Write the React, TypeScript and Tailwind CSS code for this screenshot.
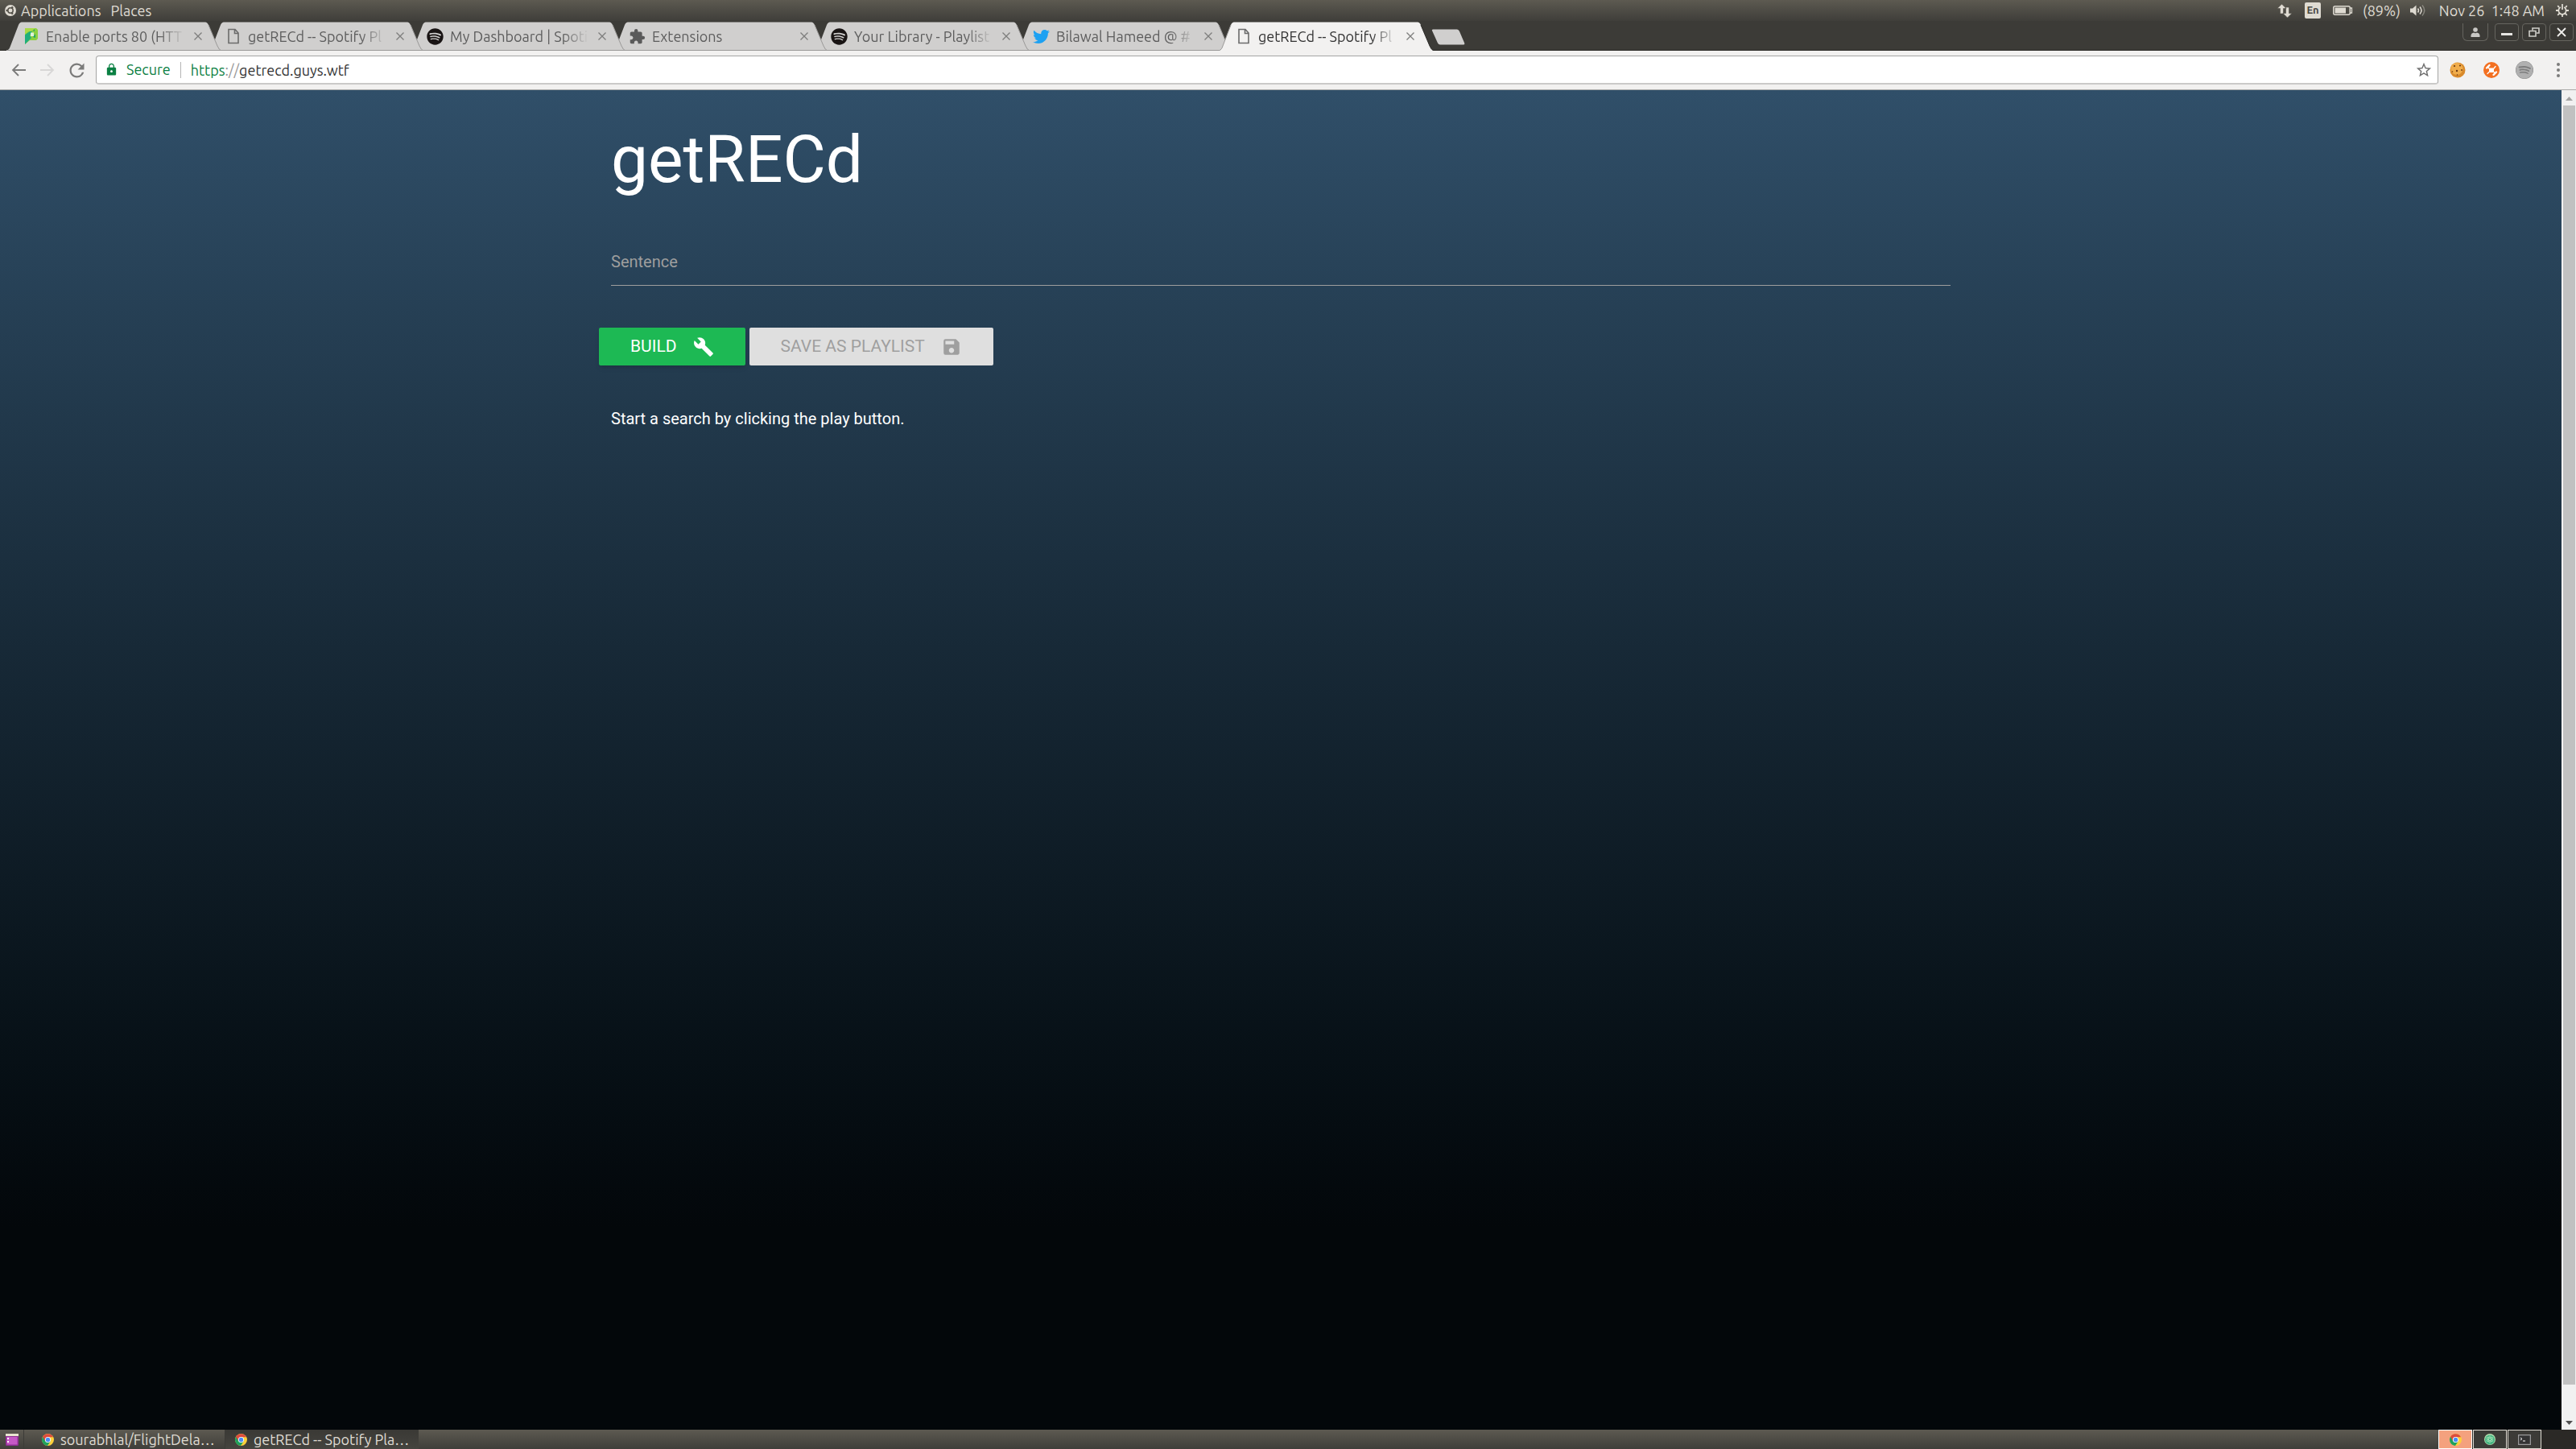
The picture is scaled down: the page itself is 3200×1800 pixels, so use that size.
import React from "react";
import { MdBuild, MdSave, MdExtension, MdLock, MdRefresh, MdStarBorder } from "react-icons/md";
import { FaSpotify, FaTwitter } from "react-icons/fa";

type Tab = { title: string; icon: React.ReactNode; active?: boolean };

const PageIcon = () => (
  <svg viewBox="0 0 14 20" className="h-5 w-4" fill="none" stroke="#6b6b6b" strokeWidth="1.6">
    <path d="M1 1.5h8l4 4.5v12.5H1zM8.5 1.5V6.5H13" />
  </svg>
);

const PathIcon = () => (
  <svg viewBox="0 0 16 20" className="h-5 w-4">
    <path d="M0 0h14l2 2v11l-2 2H6l-6 5z" fill="#8bd13f" />
    <path d="M0 8l6-4h3L6 9l2 3-8 8z" fill="#1fae7c" />
    <path d="M0 0h13L7 4H4L0 8z" fill="#a9da48" />
    <path d="M10 3l2-2v3zM10 11l3-4v5z" fill="#22a06e" />
    <path d="M7 5.500h4v4.500H7z" fill="#dff0d8" />
  </svg>
);

const ChromeIcon = () => (
  <svg viewBox="0 0 16 16" className="size-[15px] shrink-0">
    <circle cx="8" cy="8" r="8" fill="#fdd03b" />
    <path d="M8 8 1.1 4A8 8 0 0 0 7.4 16l4-6z" fill="#1fa15d" />
    <path d="M1.1 4A8 8 0 0 1 15 4.400H8L4.600 10z" fill="#dc4b3e" />
    <circle cx="8" cy="8" r="3.800" fill="#fff" />
    <circle cx="8" cy="8" r="2.900" fill="#4b8cf5" />
  </svg>
);

const UbuntuIcon = () => (
  <svg viewBox="0 0 14 14" className="size-[14px]">
    <circle cx="7" cy="7" r="7" fill="#dfdbd2" />
    <circle cx="7" cy="7" r="3.200" fill="none" stroke="#55524a" strokeWidth="1.500" />
    <g fill="#55524a">
      <circle cx="2.600" cy="7" r="1.200" />
      <circle cx="9.200" cy="3.200" r="1.200" />
      <circle cx="9.200" cy="10.800" r="1.200" />
    </g>
  </svg>
);

const tabs: Tab[] = [
  { title: "Enable ports 80 (HTT", icon: <PathIcon /> },
  { title: "getRECd -- Spotify Pl", icon: <PageIcon /> },
  { title: "My Dashboard | Spoti", icon: <FaSpotify className="size-[21px] text-[#191414]" /> },
  { title: "Extensions", icon: <MdExtension className="size-[21px] text-[#5a5a5a]" /> },
  { title: "Your Library - Playlist", icon: <FaSpotify className="size-[21px] text-[#191414]" /> },
  { title: "Bilawal Hameed @ #", icon: <FaTwitter className="size-[21px] text-[#1da1f2]" /> },
  { title: "getRECd -- Spotify Pl", icon: <PageIcon />, active: true },
];

const tabLayers = ["z-[6]", "z-[5]", "z-[4]", "z-[3]", "z-[2]", "z-[1]", "z-[7]"];

function BrowserTab({ tab, layer }: { tab: Tab; layer: string }) {
  return (
    <div className={`relative -mr-4 flex h-9 w-[267px] shrink-0 items-center pl-5 pr-6 ${layer}`}>
      <svg viewBox="0 0 267 36" preserveAspectRatio="none" className="absolute inset-0 size-full">
        <path d="M0 36C3 35 4 33 5 30L15 4Q16.500 .5 19 .5H247Q249.500 .5 251 4L262 30Q264 35 267 36z" fill={tab.active ? "#f2f1f0" : "#d0cfce"} />
        <path d="M251 4L262 30Q264 35 267 36" fill="none" stroke={tab.active ? "#2b2a27" : "#9a9998"} />
        {tab.active ? <path d="M0 36C3 35 4 33 5 30L15 4" fill="none" stroke="#9a9998" /> : <path d="M0 35.500H267" stroke="#9a9998" />}
      </svg>
      <button className="relative flex min-w-0 flex-1 items-center text-left">
        <span className="flex w-[21px] shrink-0 justify-center">{tab.icon}</span>
        <span
          className={`ml-2 w-[172px] overflow-hidden whitespace-nowrap text-[18px] leading-6 [mask-image:linear-gradient(to_right,black_82%,transparent)] ${
            tab.active ? "text-[#333]" : "text-[#5d5d5d]"
          }`}
        >
          {tab.title}
        </span>
      </button>
      <button aria-label="Close tab" className="relative ml-3">
        <svg viewBox="0 0 10 10" className="size-[10px]" stroke="#7d7d7c" strokeWidth="1.300">
          <path d="M.5.5l9 9M9.500.5l-9 9" />
        </svg>
      </button>
    </div>
  );
}

function SystemBar() {
  return (
    <header className="flex h-[26px] items-center justify-between bg-linear-to-b from-[#5d5a51] to-[#3f3e3a] pl-1.5 pr-[9px] text-[18px] text-[#dfdbd2]">
      <nav className="flex items-center">
        <UbuntuIcon />
        <button className="ml-1.5">Applications</button>
        <button className="ml-3">Places</button>
      </nav>
      <div className="flex items-center">
        <svg viewBox="0 0 18 17" className="h-[17px] w-[18px]" fill="#dfdbd2">
          <path d="M5.500 0L0 5.500h3.500V12h4V5.500H11zM12.500 17L18 11.500h-3.500V4h-4v7.500H7z" stroke="#504e47" strokeWidth=".6" />
        </svg>
        <span className="ml-4 flex h-5 w-5 items-center justify-center rounded-xs bg-[#dfdbd2] text-[13px] font-bold text-[#4a4843]">En</span>
        <svg viewBox="0 0 25 12" className="ml-[15px] h-3 w-[25px]">
          <rect x=".75" y=".75" width="20.500" height="10.500" rx="2" fill="none" stroke="#dfdbd2" strokeWidth="1.500" />
          <rect x="2.500" y="2.500" width="13.500" height="7" fill="#dfdbd2" />
          <path d="M21 3h2.500v6H21" fill="none" stroke="#dfdbd2" strokeWidth="1.300" />
        </svg>
        <span className="ml-3">(89%)</span>
        <svg viewBox="0 0 20 16" className="ml-3 h-4 w-5" fill="none" stroke="#dfdbd2" strokeWidth="1.500">
          <path d="M0 5.500h3L7.500 1.500v13L3 10.500H0z" fill="#dfdbd2" stroke="none" />
          <path d="M9.500 5.500q2 2.500 0 5M12 3.500q4 4.500 0 9" />
          <path d="M15 1.500q5.500 6.500 0 13" opacity=".4" />
        </svg>
        <span className="ml-4 whitespace-pre">Nov 26  1:48 AM</span>
        <svg viewBox="0 0 18 18" className="ml-3.5 size-4" fill="none" stroke="#dfdbd2">
          <path d="M6.500 4.500a5.300 5.300 0 1 0 5 0" strokeWidth="2" />
          <path d="M9 0v8" strokeWidth="2" />
          <path d="M9 14.500V18M3.700 9H0M14.300 9H18M5 13l-2.500 2.500M13 13l2.500 2.500M4.500 4.500l-2-2M13.500 4.500l2-2" strokeWidth="2" />
        </svg>
      </div>
    </header>
  );
}

function TabStrip() {
  const box = "flex h-[22px] w-[30px] items-center justify-center rounded-sm border border-[#66655f] bg-[#3a3935]";
  return (
    <div className="flex h-[37px] items-start justify-between border-b border-[#2b2a27] bg-[#3c3b37] pl-2 pr-[3px]">
      <div className="isolate mt-px flex">
        {tabs.map((tab, i) => (
          <BrowserTab key={i} tab={tab} layer={tabLayers[i]} />
        ))}
        <button aria-label="New tab" className="ml-[13px] mt-[9px] h-5">
          <svg viewBox="0 0 43 20" className="h-5 w-[43px]">
            <path d="M2 .5H32Q34 .5 35 3L41 17Q42 19.500 40 19.500H11Q9 19.500 8 17.500L1 2Q.5.5 2 .5z" fill="#d0cfce" />
          </svg>
        </button>
      </div>
      <div className="mt-[3px] flex gap-1">
        <button aria-label="Profile" className="mr-1 flex h-[22px] w-8 items-center justify-center rounded-b-md border border-t-0 border-[#66655f]">
          <svg viewBox="0 0 12 12" className="size-3" fill="#c9c8c5">
            <circle cx="6" cy="3" r="2.800" />
            <path d="M.5 12V9.500Q1 7 4 6.500q2 1.300 4 0 3 .5 3.500 3V12z" />
          </svg>
        </button>
        <button aria-label="Minimize" className={box}>
          <span className="mt-[5px] h-[3px] w-3.5 bg-[#e6e5e2]" />
        </button>
        <button aria-label="Restore" className={box}>
          <svg viewBox="0 0 14 12" className="h-3 w-3.5" fill="none" stroke="#d0cfca" strokeWidth="1.600">
            <path d="M5 3.500V1h8v6h-3M1 4.500h8V11H1z" />
          </svg>
        </button>
        <button aria-label="Close" className={box}>
          <svg viewBox="0 0 12 12" className="size-3" stroke="#f0efec" strokeWidth="1.800">
            <path d="M1 1l10 10M11 1L1 11" />
          </svg>
        </button>
      </div>
    </div>
  );
}

function Toolbar() {
  return (
    <div className="flex h-[49px] items-center border-b border-[#a9a9a8] bg-[#f2f1f0] pl-3.5 pr-5">
      <button aria-label="Back">
        <svg viewBox="0 0 18 16" className="h-4 w-[18px]" fill="none" stroke="#7b7b7a" strokeWidth="1.800">
          <path d="M18 8H2M9 1L2 8l7 7" />
        </svg>
      </button>
      <button aria-label="Forward" className="ml-[18px]" disabled>
        <svg viewBox="0 0 18 16" className="h-4 w-[18px]" fill="none" stroke="#d8d7d6" strokeWidth="1.800">
          <path d="M0 8h16M9 1l7 7-7 7" />
        </svg>
      </button>
      <button aria-label="Reload" className="ml-3.5">
        <MdRefresh className="size-[27px] text-[#7b7b7a]" />
      </button>
      <div className="ml-2.5 flex h-9 flex-1 items-center rounded border border-b-2 border-[#a5a5a4] border-b-[#cbcac9] bg-white pl-2.5 pr-1.5">
        <MdLock className="size-[17px] text-[#0b8043]" />
        <span className="ml-2.5 text-[18px] text-[#0b8043]">Secure</span>
        <span className="ml-3 h-5 w-px bg-[#b5b5b5]" />
        <div className="relative ml-3 h-6 flex-1 text-[18px] leading-6">
          <input aria-label="Address" defaultValue="https://getrecd.guys.wtf" className="absolute inset-0 w-full text-transparent outline-none" />
          <span aria-hidden="true" className="pointer-events-none absolute inset-0 text-[#333]">
            <span className="text-[#0b8043]">https</span>
            <span className="text-[#999]">://</span>getrecd.guys.wtf
          </span>
        </div>
        <button aria-label="Bookmark this page">
          <MdStarBorder className="size-[22px] text-[#6f6f6f]" />
        </button>
      </div>
      <button aria-label="Cookies" className="ml-3.5">
        <svg viewBox="0 0 20 20" className="size-5">
          <circle cx="10" cy="10" r="9.500" fill="#d98a2b" />
          <circle cx="9" cy="8.500" r="7.500" fill="#f0ad4c" />
          <g fill="#6d3a12">
            <circle cx="6" cy="5" r="1.100" /><circle cx="13" cy="4.500" r="1.100" /><circle cx="9" cy="11" r="1.200" />
            <circle cx="3.500" cy="12" r=".8" /><circle cx="15" cy="10" r=".9" /><circle cx="9.500" cy="16" r=".8" />
          </g>
        </svg>
      </button>
      <button aria-label="Extension" className="ml-[22px]">
        <svg viewBox="0 0 20 20" className="size-5">
          <circle cx="10" cy="10" r="10" fill="#f37021" />
          <rect x="7" y="7.500" width="6" height="5.500" rx="1" fill="#fff" />
          <path d="M4 7.500L7.500 4M12.500 16l3.500-3.500" stroke="#fff" strokeWidth="2.400" strokeLinecap="round" fill="none" />
          <path d="M7 8L5.500 6.500M13 8l2-2.500M7 12.500L5 14.500M13 12.500l1.500 1.500" stroke="#fff" strokeWidth="1.300" strokeLinecap="round" />
        </svg>
      </button>
      <button aria-label="Spotify" className="ml-5">
        <FaSpotify className="size-[22px] rounded-full bg-[#7d7d7d] text-[#b0b0b0]" />
      </button>
      <button aria-label="Menu" className="ml-[29px] flex flex-col gap-[3px]">
        <span className="size-1 rounded-full bg-[#7b7b7a]" />
        <span className="size-1 rounded-full bg-[#7b7b7a]" />
        <span className="size-1 rounded-full bg-[#7b7b7a]" />
      </button>
    </div>
  );
}

function Page() {
  return (
    <main className="flex-1 bg-linear-to-b from-[#304f69] to-[#03070a] to-85% font-[Roboto,sans-serif] text-white">
      <div className="mx-auto w-[1664px] max-w-full">
        <h1 className="pt-9 text-[82px] leading-[100px]">getRECd</h1>
        <div className="relative mt-[47px]">
          <label htmlFor="sentence" className="pointer-events-none absolute inset-y-0 left-0 flex items-center text-[20px] text-[#9e9e9e]">Sentence</label>
          <input id="sentence" className="block h-[60px] w-full border-b border-[#9e9e9e] text-[20px] outline-none" />
        </div>
        <div className="-ml-[15px] mt-[52px] flex gap-[5px] text-[21px]">
          <button className="flex h-[47px] items-center rounded-xs bg-[#1db954] px-[39px] shadow-md">BUILD<MdBuild className="ml-5 size-[26px]" /></button>
          <button disabled className="flex h-[47px] items-center rounded-xs bg-[#dfdfdf] px-[39px] text-[#9f9f9f]">SAVE AS PLAYLIST<MdSave className="ml-5 size-[26px]" /></button>
        </div>
        <p className="mt-[51px] text-[20px] leading-[30px]">Start a search by clicking the play button.</p>
      </div>
    </main>
  );
}

function Scrollbar() {
  return (
    <div className="flex w-[18px] flex-col items-center bg-[#f1f1f1]">
      <svg viewBox="0 0 18 19" className="h-[19px] w-[18px]"><path d="M5 13h9L9.500 8z" fill="#a3a3a3" /></svg>
      <div className="w-[15px] flex-1 bg-[#c1c1c1]" />
      <svg viewBox="0 0 18 56" className="h-14 w-[18px]"><path d="M5 45h9L9.500 50z" fill="#505050" /></svg>
    </div>
  );
}

function TaskBar() {
  return (
    <footer className="flex h-6 items-stretch justify-between bg-linear-to-b from-[#5d5a51] to-[#3f3e3a] text-[18px] leading-6 text-[#dfdbd2]">
      <div className="flex">
        <button aria-label="Show desktop" className="flex w-[30px] items-center justify-center border-r border-[#3c3b37]">
          <svg viewBox="0 0 16 15" className="h-[15px] w-4">
            <rect y="1" width="16" height="14" rx="1.500" fill="#8d2f92" />
            <rect x="1.500" y="4" width="13" height="9.500" fill="#c559c5" />
            <rect width="16" height="3" fill="#e8e4cf" />
            <path d="M2 5h2v2H2zM2 9h2v2H2z" fill="#fff" />
          </svg>
        </button>
        <button className="flex w-[250px] items-center border-r border-[#3c3b37] pl-[22px]"><ChromeIcon /><span className="ml-2">sourabhlal/FlightDela…</span></button>
        <button className="flex w-60 items-center bg-linear-to-b from-[#3a3935] to-[#45443f] pl-3"><ChromeIcon /><span className="ml-2">getRECd -- Spotify Pla…</span></button>
      </div>
      <div className="flex gap-px bg-[#2b2926] pr-[43px]">
        <button aria-label="Workspace 1" className="flex w-[42px] items-center justify-center border border-white bg-[#f4a17e]"><ChromeIcon /></button>
        <button aria-label="Workspace 2" className="flex w-[42px] items-center justify-center border border-[#dfdbd2] bg-[#3c3b37]">
          <svg viewBox="0 0 14 14" className="size-3.5"><circle cx="7" cy="7" r="7" fill="#b5dcae" /><circle cx="7" cy="7.500" r="6" fill="#45b583" /><g fill="none" stroke="#a5e0b4" strokeWidth=".8"><ellipse cx="7" cy="7" rx="1.600" ry="4.300" /><ellipse cx="7" cy="7" rx="1.600" ry="4.300" transform="rotate(60 7 7)" /><ellipse cx="7" cy="7" rx="1.600" ry="4.300" transform="rotate(120 7 7)" /></g></svg>
        </button>
        <button aria-label="Workspace 3" className="flex w-[42px] items-center justify-center border border-[#dfdbd2] bg-[#3c3b37]">
          <svg viewBox="0 0 16 13" className="h-[13px] w-4"><rect x=".5" y=".5" width="15" height="12" fill="#333" stroke="#999" strokeWidth="1.500" /><path d="M3 4l2 1.500L3 7M6 8h3" stroke="#fff" fill="none" /></svg>
        </button>
      </div>
    </footer>
  );
}

export default function App() {
  return (
    <div className="flex min-h-screen flex-col font-[Ubuntu,'Open_Sans','Noto_Sans',sans-serif]">
      <SystemBar />
      <TabStrip />
      <Toolbar />
      <div className="flex flex-1">
        <Page />
        <Scrollbar />
      </div>
      <TaskBar />
    </div>
  );
}
